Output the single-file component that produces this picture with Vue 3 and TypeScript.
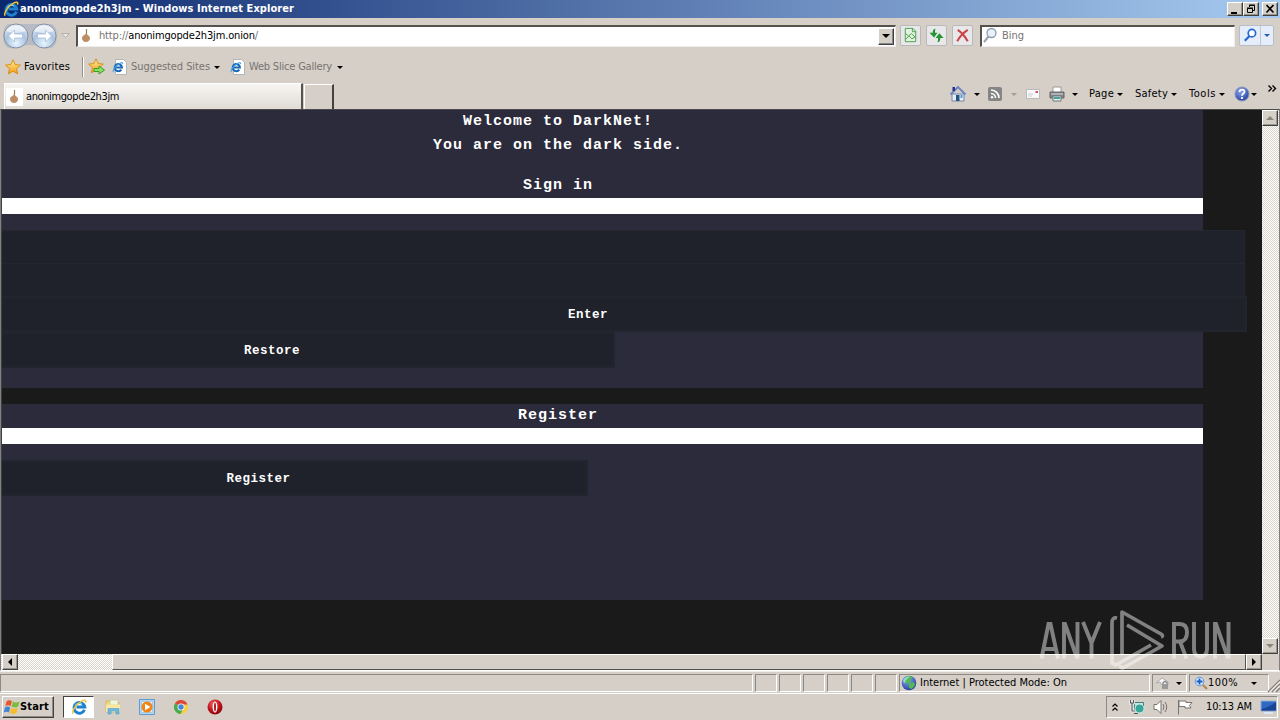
<script setup lang="ts">
interface Label { text: string; width: number }

// Distributes the difference between natural and desired width over the glyphs.
const vFit = {
  mounted(el: HTMLElement, binding: { value: number }) {
    const natural = el.getBoundingClientRect().width
    const count = (el.textContent ?? '').length
    el.style.letterSpacing = `${(binding.value - natural) / count}px`
  },
}

const menus: Label[] = [
  { text: 'Page', width: 25 },
  { text: 'Safety', width: 33 },
  { text: 'Tools', width: 27 },
]
const statusCells = [1, 2, 3, 4, 5]
</script>

<template>
  <div class="screen">
    <svg class="defs" width="0" height="0">
      <defs>
        <radialGradient id="orb" cx=".5" cy=".8" r=".8"><stop offset="0" stop-color="#e6f6fd" /><stop offset=".55" stop-color="#a9c3e0" /><stop offset="1" stop-color="#e9eef5" /></radialGradient>
        <linearGradient id="star" x1="0" y1="0" x2="0" y2="1"><stop offset="0" stop-color="#fff09a" /><stop offset="1" stop-color="#f59a13" /></linearGradient>
        <radialGradient id="red" cx=".4" cy=".3" r=".8"><stop offset="0" stop-color="#f06a6a" /><stop offset=".5" stop-color="#c4161c" /><stop offset="1" stop-color="#7c0005" /></radialGradient>
        <radialGradient id="blue" cx=".4" cy=".3" r=".8"><stop offset="0" stop-color="#8ea9ee" /><stop offset="1" stop-color="#17349a" /></radialGradient>
        <symbol id="ie" viewBox="0 0 16 16">
          <path d="M13.500 10.800A5.400 5.400 0 1 1 13.800 8H5.500" fill="none" stroke="#1c82d0" stroke-width="2.900" />
          <path d="M4.200 7A4.300 4.300 0 0 1 11 5.200" fill="none" stroke="#7cc8f4" stroke-width="1.200" />
          <path d="M2.300 14.700C-.2 13.400 4.800 5.400 10.500 2.200c3-1.700 5-1.200 3.900 1.600" fill="none" stroke="#efc63a" stroke-width="1.500" />
        </symbol>
        <symbol id="page-ie" viewBox="0 0 16 16">
          <path d="M3.500.5h8l3 3v12h-11z" fill="#fff" stroke="#b5b5b5" />
          <path d="M9.300 10.700A3.600 3.600 0 1 1 9.900 8.500H4" fill="none" stroke="#1767b8" stroke-width="2.100" />
          <path d="M1.500 13C0 11.500 4 6 8.500 4c2-.8 2.500 0 2 1" fill="none" stroke="#49a3e2" stroke-width="1.100" />
        </symbol>
        <symbol id="onion" viewBox="0 0 10 14"><path d="M5.500 0v6" stroke="#9a8155" stroke-width="1.200" /><path d="M5 4.500c1 1.500 4 2 4 4.800C9 11.600 7 13 5 13s-4-1.400-4-3.700C1 6.500 4 6 5 4.500z" fill="#bd8d66" /></symbol>
      </defs>
    </svg>

    <header class="title-bar">
      <svg class="app-icon" viewBox="0 0 16 16"><use href="#ie" /></svg>
      <span class="title"><span v-fit="274">anonimgopde2h3jm - Windows Internet Explorer</span></span>
      <div class="window-buttons">
        <i class="win"><svg viewBox="0 0 14 12"><path d="M3 9h6v2H3z" /></svg></i>
        <i class="win"><svg viewBox="0 0 14 12"><path d="M5.500 4V2.500h5v5H9M5 2h6" fill="none" stroke="#000" /><path d="M3.500 5.500h5v4h-5zM3 5h6" fill="none" stroke="#000" /></svg></i>
        <i class="win close"><svg viewBox="0 0 14 12"><path d="M3.500 2l7 7.500m0-7.500l-7 7.500" stroke="#000" stroke-width="1.700" /></svg></i>
      </div>
    </header>

    <div class="address-row">
      <svg class="nav" viewBox="0 0 58 30">
        <path d="M8 3h42c8 2 8 22 0 24-8 2-10-3-21-3S16 29 8 27C0 25 0 5 8 3z" fill="#b8bac4" />
        <g stroke="#8590a2"><circle cx="15" cy="15" r="12" fill="url(#orb)" /><circle cx="43" cy="15" r="12" fill="url(#orb)" /></g>
        <path d="M5 10a11 9 0 0 1 20 0q-10 4-20 0zM33 10a11 9 0 0 1 20 0q-10 4-20 0z" fill="#fff" opacity=".6" />
        <path d="M7.500 15l6-6v4h8v4h-8v4zM50.500 15l-6-6v4h-8v4h8v4z" fill="#fff" stroke="#a9bedb" stroke-width=".8" />
      </svg>
      <svg class="recent" viewBox="0 0 9 6"><path d="M.5.5h8l-4 4z" fill="#e8e5e0" stroke="#b4b1ab" /></svg>
      <div class="url-box">
        <svg class="url-icon" viewBox="0 0 10 14"><use href="#onion" /></svg>
        <span v-fit="159" class="url"><span class="muted">http://</span>anonimgopde2h3jm.onion<span class="muted">/</span></span>
        <i class="drop"><b class="arrow"></b></i>
      </div>
      <div class="tool-group">
        <i class="tool"><svg viewBox="0 0 20 20"><path d="M4.500 2.500h8l3 3v11h-11z" fill="#e2f2df" stroke="#48a04b" /><path d="M12 2.500v3.500h3.500M5 8l3 2.500L11 8l4 4M5 14l3.500-3.500 3 3 3.500-2" fill="none" stroke="#48a04b" /></svg></i>
        <i class="tool"><svg viewBox="0 0 20 20"><path d="M9 3Q6 3 6 7H2.500L7.500 12l3.500-5H8.500Q8 5 9 3zM11 17q3 0 3-4.500h3.500L13 7.500 9 12.500h2.500q.5 2.500-.5 4.500z" fill="#279333" /></svg></i>
        <i class="tool"><svg viewBox="0 0 20 20"><path d="M5 4q6 4 10.500 12M15.500 4Q8 9 4.500 16" fill="none" stroke="#cc4247" stroke-width="2.200" /></svg></i>
      </div>
      <div class="search-box">
        <svg viewBox="0 0 16 18"><circle cx="9.500" cy="6" r="4.500" fill="#e8f1fa" stroke="#8f9cac" stroke-width="1.300" /><path d="M6.500 9.500L2 15" stroke="#98a2ad" stroke-width="2" /></svg>
        <span v-fit="22">Bing</span>
      </div>
      <div class="search-go">
        <svg viewBox="0 0 20 20"><circle cx="12" cy="7.500" r="3.900" fill="#fff" stroke="#2467cf" stroke-width="1.800" /><path d="M9.500 10.500l-5 5" stroke="#2467cf" stroke-width="2.400" /></svg>
        <span><b class="arrow blue"></b></span>
      </div>
    </div>

    <div class="favorites">
      <svg class="fav-star" viewBox="0 0 16 16"><path d="M8 .8l2.200 4.800 5.200.5-3.900 3.500 1.200 5.300L8 12.200l-4.700 2.700 1.200-5.300L.6 6.100l5.200-.5z" fill="url(#star)" stroke="#d99018" /></svg>
      <span v-fit="46">Favorites</span>
      <i class="divider"></i>
      <svg class="add-star" viewBox="0 0 18 18"><path d="M8 .8l2.200 4.800 5.200.5-3.900 3.500 1.200 5.300L8 12.200l-4.700 2.700 1.200-5.300L.6 6.100l5.200-.5z" fill="url(#star)" stroke="#d99018" /><path d="M6 10.500h5V8l5.500 4-5.500 4v-2.500H6z" fill="#8bdf65" stroke="#34a126" /></svg>
      <svg class="doc" viewBox="0 0 16 16"><use href="#page-ie" /></svg>
      <span v-fit="79" class="muted">Suggested Sites</span><b class="arrow"></b>
      <svg class="doc second" viewBox="0 0 16 16"><use href="#page-ie" /></svg>
      <span v-fit="83" class="muted">Web Slice Gallery</span><b class="arrow gap"></b>
    </div>

    <div class="tabs">
      <div class="tab"><span class="tab-icon"><svg viewBox="0 0 10 14"><use href="#onion" /></svg></span><span v-fit="93">anonimgopde2h3jm</span></div>
      <div class="new-tab"></div>
      <div class="commands">
        <svg class="home" viewBox="0 0 16 16"><path d="M2 8h12v7H2z" fill="#e7edf6" stroke="#7786aa" /><path d="M.5 8.500L8 1l7.500 7.500" fill="none" stroke="#6c82c0" stroke-width="1.800" /><path d="M2.500 1h2.500v4H2.500z" fill="#23318b" /><path d="M6 9h3.500v6H6z" fill="#24557d" /><path d="M10.500 9h2v3h-2z" fill="#4c9ad8" /></svg>
        <b class="arrow a-home"></b>
        <svg class="feed" viewBox="0 0 14 14"><rect width="14" height="14" rx="2" fill="#858585" /><g fill="none" stroke="#fff" stroke-width="1.600"><path d="M3 6.500A4.500 4.500 0 0 1 7.500 11M3 3a8 8 0 0 1 8 8" /></g><circle cx="4" cy="10.200" r="1.200" fill="#fff" /></svg>
        <b class="arrow faded"></b>
        <svg class="mail" viewBox="0 0 14 11"><path d="M.5.5h13v9H.5z" fill="#f9f9fa" stroke="#b9b9bd" /><path d="M2 5h5M2 7h4" stroke="#ccc" /><path d="M9.500 2h2.500v2H9.500z" fill="#ce5362" /></svg>
        <svg class="printer" viewBox="0 0 16 16"><path d="M4 1h8v6H4z" fill="#fff" stroke="#999" /><path d="M1 6h14v6H1z" fill="#80848a" stroke="#666" /><path d="M2 8h12" stroke="#ddd" /><path d="M4 10h8v5H4z" fill="#dceeed" stroke="#777" /><path d="M5 12h6" stroke="#42a6a0" stroke-width="2" /></svg>
        <b class="arrow a-print"></b>
        <span v-for="m in menus" :key="m.text" class="menu"><span v-fit="m.width">{{ m.text }}</span><b class="arrow"></b></span>
        <svg class="help" viewBox="0 0 16 16"><circle cx="8" cy="8" r="7" fill="url(#blue)" stroke="#8694b8" /><path d="M5.500 6C5.500 2.500 11 3 10.500 6c-.2 1.500-2.500 1.600-2.500 3.700M8 11v2" fill="none" stroke="#fff" stroke-width="1.800" /></svg>
        <b class="arrow"></b>
        <svg class="more" viewBox="0 0 8 7"><path d="M.5.5l3 3-3 3M4.500.5l3 3-3 3" fill="none" stroke="#000" stroke-width="1.400" /></svg>
      </div>
    </div>

    <main class="viewport">
      <div class="page">
        <section class="panel sign-in">
          <h1>Welcome to DarkNet!</h1>
          <h1>You are on the dark side.</h1>
          <h2>Sign in</h2>
          <div class="rule"></div>
          <div class="fields">
            <div class="field"></div>
            <div class="field"></div>
            <div class="button enter">Enter</div>
            <div class="button restore">Restore</div>
          </div>
        </section>
        <section class="panel register">
          <h2>Register</h2>
          <div class="rule"></div>
          <div class="fields"><div class="button signup">Register</div></div>
        </section>
      </div>
      <div class="v-scroll"><i class="scroll-button"><b class="up"></b></i><i class="scroll-button"><b class="arrow grey"></b></i></div>
      <div class="h-scroll"><i class="scroll-button"><b class="left"></b></i><i class="thumb"></i><i class="scroll-button"><b class="right"></b></i></div>
      <div class="corner"></div>
    </main>

    <footer class="status">
      <div class="cell wide"></div>
      <div v-for="c in statusCells" :key="c" class="cell small"></div>
      <div class="cell last"></div>
      <div class="cell zone">
        <svg viewBox="0 0 16 16"><circle cx="8" cy="8" r="7.300" fill="url(#blue)" /><path d="M4 2.500Q8-.5 12 2.500l-3 2 1 3-4 1-3-2zM8 9l5-2 1 3-3 4-3-1z" fill="#53bb4c" /><path d="M2 5Q5 1 9 1.500L5 5 3 9z" fill="#a1e6e6" opacity=".8" /></svg>
        <span v-fit="147">Internet | Protected Mode: On</span>
      </div>
      <div class="cell privacy">
        <svg viewBox="0 0 16 16"><path d="M1 8l6-5 6 4v3H7l-2-3z" fill="#f6f6f6" stroke="#aaa" /><path d="M8 10V8q2-3 4 0v2" fill="none" stroke="#888" stroke-width="1.400" /><path d="M7 9h6v5H7z" fill="#999" /></svg><b class="arrow"></b>
      </div>
      <div class="cell zoom">
        <svg viewBox="0 0 14 14"><circle cx="5.500" cy="5.500" r="4.300" fill="#d8eafd" stroke="#6793ca" /><path d="M5.500 2.500v6m-3-3h6" stroke="#1b5fc2" stroke-width="1.800" /><path d="M9 9l4 4" stroke="#b6884e" stroke-width="2.200" /></svg>
        <span v-fit="30">100%</span><b class="arrow"></b>
      </div>
      <svg class="grip" viewBox="0 0 12 14"><path d="M0 14L12 2M4 14l8-8M8 14l4-4" stroke="#85817a" stroke-width="1.500" /><path d="M1.500 14L12 3.500M5.500 14L12 7.500" stroke="#fff" /></svg>
    </footer>

    <footer class="taskbar">
      <div class="start">
        <svg viewBox="0 0 16 16"><path d="M2.500 2.500Q5 0 8 2.200L6.500 7.200Q4 5.500 1.300 7.200z" fill="#e8562d" /><path d="M9 2.500q3 2 6.500 0l-1.300 5q-3.200 2-6.700 0z" fill="#7dbc3e" /><path d="M1 8.500Q3.500 6.500 6.200 8.500L4.900 13.500Q2.500 12-.3 13.500z" fill="#4385d4" /><path d="M7.200 8.800q3.500 2 6.800 0L12.500 14q-3.500 2-6.600 0z" fill="#f5bd2d" /></svg>
        <span v-fit="29">Start</span>
      </div>
      <div class="task active"><svg viewBox="0 0 16 16"><use href="#ie" /></svg></div>
      <svg class="task-icon" viewBox="0 0 16 16"><path d="M1 2h6l1 1.500h6V13H1z" fill="#f2d779" stroke="#d8b95a" /><path d="M5 1h8v5H5z" fill="#eef5dc" stroke="#bdc993" stroke-width=".7" /><path d="M1 5.500h14V13H1z" fill="#f9e7a2" /><path d="M3 15V9.500h11V15h-3v-3H6v3z" fill="#6cb8df" stroke="#4d9fcd" stroke-width=".6" /></svg>
      <svg class="task-icon" viewBox="0 0 16 16"><path d="M.5.5h15v15H.5z" fill="#b5d8f2" stroke="#5e9bd0" /><path d="M2.500 2.500h11v11h-11z" fill="#e3f1fb" stroke="#8fb9db" stroke-width=".6" /><circle cx="8" cy="8" r="5.500" fill="#ef8417" /><path d="M6 4.700v6.600L11.500 8z" fill="#fff" /></svg>
      <svg class="task-icon" viewBox="0 0 16 16"><circle cx="8" cy="8" r="7" fill="#f6ce3f" /><path d="M8 8L1.900 4.500A7 7 0 0 1 14.500 5.500H8z" fill="#d9483b" /><path d="M8 8L1.900 4.500A7 7 0 0 0 7.500 15l3-5.500z" fill="#4aa956" /><circle cx="8" cy="8" r="3.500" fill="#fff" /><circle cx="8" cy="8" r="2.700" fill="#4a86d8" /></svg>
      <svg class="task-icon" viewBox="0 0 16 16"><circle cx="8" cy="8" r="7.500" fill="url(#red)" /><ellipse cx="8" cy="8" rx="2.400" ry="5.600" fill="#fff" /><ellipse cx="8" cy="8" rx="1" ry="4.600" fill="#b61b21" /></svg>
      <div class="tray">
        <svg class="chev" viewBox="0 0 6 9"><path d="M.5 3.500L3 1l2.500 2.500M.5 7.500L3 5l2.500 2.500" fill="none" stroke="#000" stroke-width="1.200" /></svg>
        <svg class="net" viewBox="0 0 16 16"><path d="M5.500 3.500h9v8h-9z" fill="#bfe7e2" stroke="#477d78" /><path d="M1.500 1v3h3V1M3 4v8h3" fill="none" stroke="#fff" stroke-width="2.600" /><path d="M1.500 1v3h3V1M3 4v8h3" fill="none" stroke="#555" stroke-width="1.200" /><circle cx="10.500" cy="9.500" r="4.500" fill="#39a69b" stroke="#d0efec" /><path d="M5 14.500h4" stroke="#555" /></svg>
        <svg class="sound" viewBox="0 0 16 16"><path d="M1 5.500h3l4-4v13l-4-4H1z" fill="#fff" stroke="#77736d" /><path d="M10 5q2 3 0 6M12 3q3.500 5 0 10" fill="none" stroke="#77736d" /></svg>
        <svg class="flag" viewBox="0 0 16 16"><path d="M1.500 1v14.500M2 2h7v1.500h6l-2.500 3L14 9H8V7.500H2z" fill="#fff" stroke="#77736d" /></svg>
        <span v-fit="46">10:13 AM</span>
        <svg class="desktop" viewBox="0 0 16 14"><path d="M1 1h15v10H1z" fill="#2e68c5" stroke="#92a8cf" /><path d="M1.500 9Q8 8 16 2v8.500H1.500z" fill="#174493" /><path d="M4 13h9" stroke="#d9e8f7" stroke-width="2" /></svg>
      </div>
    </footer>

    <svg class="watermark" viewBox="0 0 210 72">
      <g fill="none" stroke="#fff" stroke-width="3.900">
        <path d="M11.500 54.500L18.500 20h2l7.500 34.500M14 45h11.500" />
        <path d="M34 54.500V20h1l11.500 32.500h1V18" />
        <path d="M53 18l8.500 21L70 18M61.500 38v16.500" />
        <path d="M144 54.500V20h6q7 0 7 8.500T150 37.500h-6M150 37.500l6.500 17" />
        <path d="M164 18v27q0 7.500 6.500 7.500t6.500-7.500V18" />
        <path d="M185 54.500V20h1l11.500 32.500h1V18" />
      </g>
      <path d="M87 14q-5-1-5 5v40l4 2 35-20M92 50V8l39 22q3 2 0 3M97 21l35 21-39 22q-3 0-2-3" fill="none" stroke="#fff" stroke-width="3.700" stroke-linejoin="round" />
    </svg>
  </div>
</template>

<style>
html, body { margin: 0; background: #d4d0c8; overflow: hidden; }
</style>

<style scoped>
* { box-sizing: border-box; }
.screen { position: relative; width: 1280px; height: 720px; overflow: hidden; display: flex; flex-direction: column; background: #d5cfc8; color: #000; font: 11px/14px "DejaVu Sans Condensed", "DejaVu Sans", sans-serif; white-space: nowrap; }
.defs { position: absolute; }
svg, i, b { display: block; flex: none; }
svg { overflow: visible; }
.muted { color: #77746f; }
.arrow { width: 0; height: 0; border: 3px solid transparent; border-top-color: #000; border-bottom: 0; }
.title-bar { height: 18px; display: flex; align-items: center; background: linear-gradient(90deg, #0b276d, #a6caf0); padding: 0 2px 0 3px; }
.app-icon { width: 16px; height: 16px; margin-right: 1px; }
.title { flex: 1; color: #fff; font-weight: bold; }
.window-buttons { display: flex; }
.win { width: 16px; height: 14px; background: #d4d0c8; border: 1px solid #fff; border-right-color: #404040; border-bottom-color: #404040; box-shadow: inset -1px -1px #96918b; }
.win svg { width: 14px; height: 12px; }
.win.close { margin-left: 3px; }
.address-row { height: 35px; display: flex; align-items: center; padding-left: 1px; }
.nav { width: 58px; height: 30px; }
.recent { width: 9px; height: 6px; margin-left: 2px; }
.url-box { width: 820px; height: 22px; margin-left: 6px; display: flex; align-items: center; background: #fff; border: 2px solid #55524e; border-right: 1px solid #eee; border-bottom: 1px solid #eee; }
.url-icon { width: 10px; height: 14px; margin-left: 3px; margin-right: 8px; }
.drop { width: 16px; height: 17px; margin: 0 1px 0 auto; display: grid; place-items: center; background: #d4d0c8; border: 1px solid #fff; border-right-color: #404040; border-bottom-color: #404040; box-shadow: inset -1px -1px #888; }
.drop .arrow { border-width: 4px 4px 0; }
.tool-group { display: flex; gap: 5px; margin-left: 4px; }
.tool { width: 21px; height: 21px; border: 1px solid #bab8b8; border-radius: 2px; background: #e8e8eb; }
.tool svg { width: 19px; height: 19px; }
.search-box { width: 255px; height: 22px; margin-left: 7px; display: flex; align-items: center; gap: 4px; color: #77746f; background: #fff; border: 2px solid #55524e; border-right: 1px solid #eee; border-bottom: 1px solid #eee; }
.search-box svg { width: 16px; height: 18px; }
.search-go { width: 35px; height: 21px; margin-left: 4px; display: flex; border: 1px solid #b8bdc8; border-radius: 2px; background: #e5edfa; }
.search-go svg { width: 20px; height: 19px; }
.search-go span { flex: 1; display: grid; place-items: center; border-left: 1px solid #c1c7d3; }
.blue { border-top-color: #2460b8; }
.favorites { height: 28px; display: flex; align-items: center; padding-left: 5px; }
.fav-star { width: 16px; height: 16px; margin-right: 3px; }
.divider { width: 2px; height: 20px; margin: 0 4px 0 12px; border-left: 1px solid #918d87; border-right: 1px solid #fff; }
.add-star { width: 18px; height: 18px; }
.doc { width: 16px; height: 16px; margin: 0 3px 0 6px; }
.favorites .arrow { margin-left: 4px; }
.doc.second { margin-left: 10px; }
.favorites .gap { margin-left: 5px; }
.tabs { height: 28px; display: flex; align-items: flex-end; padding-left: 4px; }
.tab { width: 299px; height: 26px; display: flex; align-items: center; background: linear-gradient(#f7f5f3, #e0dbd4); border: 1px solid #fff; border-bottom: 0; border-right: 2px solid #55524f; padding: 0 0 0 1px; }
.tab-icon { width: 17px; height: 18px; padding: 2px 3px; margin-right: 3px; background: #fff; }
.tab-icon svg { width: 10px; height: 14px; }
.new-tab { width: 30px; height: 25px; margin-left: 1px; border: 1px solid #fff; border-right: 2px solid #44413e; border-bottom: 0; }
.commands { flex: 1; align-self: stretch; display: flex; align-items: center; justify-content: flex-end; padding: 0 4px 2px 0; }
.home { width: 16px; height: 16px; }
.a-home { margin: 0 8px 0 8px; }
.feed { width: 14px; height: 14px; margin-right: 9px; }
.faded { border-top-color: #a09c95; margin-right: 9px; }
.mail { width: 14px; height: 11px; margin-right: 9px; }
.printer { width: 16px; height: 16px; }
.a-print { margin: 0 11px 0 7px; }
.menu { display: flex; align-items: center; margin-right: 12px; }
.menu .arrow { margin-left: 3px; }
.help { width: 16px; height: 16px; margin: 0 1px 0 -3px; }
.more { width: 8px; height: 7px; margin: -12px 0 0 11px; }
.viewport { height: 562px; display: grid; grid-template-columns: 1261px 17px; grid-template-rows: 544px 16px; border: 1px solid #808080; border-top-color: #4a4a4b; border-bottom-color: #fff; }
.page { overflow: hidden; background: #1a1a1a; border-left: 1px solid #404040; }
.panel { width: 1201px; background: #2b2b3b; color: #fff; font: bold 15px/24px "Liberation Mono", monospace; }
h1, h2 { margin: 0; padding-right: 89px; font: inherit; text-align: center; letter-spacing: 1px; }
.sign-in { height: 278px; }
.sign-in h2 { padding-top: 16px; }
.rule { height: 16px; background: #fff; }
.fields { padding-top: 16px; }
.field { width: 1243px; height: 33px; background: #20222b; border: 1px solid #242630; border-left: 0; border-bottom: 0; }
.button { height: 36px; background: #20222b; border: 2px solid #22252e; border-left: 0; text-align: center; font-size: 12.5px; letter-spacing: .5px; line-height: 34px; }
.enter { width: 1245px; padding-right: 71px; }
.restore { width: 613px; padding-right: 71px; }
.register { height: 196px; margin-top: 16px; }
.signup { width: 586px; padding-right: 71px; }
.v-scroll, .h-scroll { display: flex; justify-content: space-between; background: repeating-conic-gradient(#fff 0 25%, #d8d3cb 0 50%) 0 0 / 2px 2px; }
.v-scroll { flex-direction: column; }
.scroll-button { width: 16px; height: 16px; display: grid; place-items: center; background: #d4d0c8; border: 1px solid #fff; border-right-color: #44413e; border-bottom-color: #44413e; box-shadow: inset -1px -1px #9b9791; }
.h-scroll { padding-left: 1px; }
.thumb { flex: 1; margin-left: 94px; background: #d5cfc8; border: 1px solid #fff; border-right-color: #55514d; border-bottom-color: #55514d; }
.up { border: 4px solid transparent; border-bottom-color: #8a867f; border-top: 0; }
.grey { border-width: 4px 4px 0; border-top-color: #8a867f; }
.left { border: 4px solid transparent; border-right-color: #000; border-left: 0; }
.right { border: 4px solid transparent; border-left-color: #000; border-right: 0; }
.corner { background: #d5cfc8; }
.status { height: 22px; display: flex; padding-top: 2px; gap: 2px; border-top: 1px solid #f1eeea; }
.cell { height: 18px; display: flex; align-items: center; border: 1px solid #8c8882; border-right-color: #fff; border-bottom-color: #fff; }
.wide { width: 753px; }
.small { width: 22px; }
.last { width: 22px; }
.zone { width: 251px; gap: 3px; padding-left: 1px; }
.zone svg { width: 16px; height: 16px; }
.privacy { width: 35px; padding-left: 2px; gap: 5px; }
.privacy svg { width: 16px; height: 16px; }
.zoom { width: 80px; padding-left: 4px; }
.zoom svg { width: 14px; height: 14px; }
.zoom .arrow { margin-left: 13px; }
.grip { width: 12px; height: 14px; margin: 4px 0 0 -3px; }
.taskbar { height: 27px; display: flex; align-items: center; padding: 0 2px; border-top: 1px solid #fff; }
.start { width: 52px; height: 22px; display: flex; align-items: center; padding-left: 1px; font-weight: bold; border: 1px solid #fff; border-right-color: #44413e; border-bottom-color: #44413e; box-shadow: inset -1px -1px #8f8b85; }
.start svg { width: 16px; height: 16px; }
.task { width: 31px; height: 22px; display: grid; place-items: center; margin-left: 9px; background: #fff; border: 1px solid #44413e; border-right-color: #fff; border-bottom-color: #fff; }
.task svg { width: 16px; height: 16px; }
.task-icon { width: 16px; height: 16px; margin-left: 18px; }
.task.active + .task-icon { margin-left: 11px; }
.tray { width: 172px; height: 22px; margin-left: auto; display: flex; align-items: center; padding-left: 5px; border: 1px solid #8c8882; border-right-color: #fff; border-bottom-color: #fff; }
.chev { width: 6px; height: 9px; margin-right: 11px; }
.net, .sound, .flag { width: 16px; height: 16px; margin-right: 8px; }
.flag { margin-right: 13px; }
.desktop { width: 16px; height: 14px; margin-left: 8px; }
.watermark { position: absolute; left: 1030px; top: 604px; width: 210px; height: 72px; opacity: .45; }
</style>
